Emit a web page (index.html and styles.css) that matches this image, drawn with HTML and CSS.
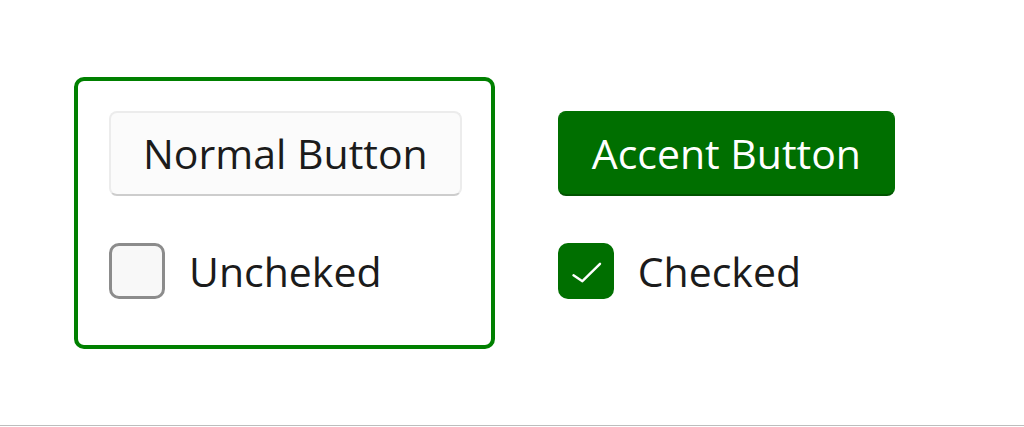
FILE: index.html
```html
<!DOCTYPE html>
<html lang="en">
<head>
<meta charset="utf-8">
<title>Buttons and checkboxes</title>
<link rel="stylesheet" href="styles.css">
</head>
<body>
<main class="page">
  <section class="group">
    <button class="btn btn-normal" type="button">Normal Button</button>
    <label class="check">
      <span class="box box-empty"></span>
      <span class="check-label">Uncheked</span>
    </label>
  </section>
  <section class="column">
    <button class="btn btn-accent" type="button">Accent Button</button>
    <label class="check">
      <span class="box box-checked">
        <svg width="56" height="56" viewBox="0 0 56 56" aria-hidden="true">
          <path d="M15.5 32.3 L24.4 38.2 L42 20.8" fill="none" stroke="#ffffff" stroke-width="2.4" stroke-linecap="round" stroke-linejoin="round"/>
        </svg>
      </span>
      <span class="check-label">Checked</span>
    </label>
  </section>
</main>
<div class="rule"></div>
</body>
</html>
```

FILE: styles.css
```css
* { box-sizing: border-box; }

html, body {
  margin: 0;
  padding: 0;
  background: #ffffff;
}

body {
  font-family: "Open Sans", "Noto Sans", sans-serif;
  color: #1b1b1b;
  height: 427px;
  overflow: hidden;
}

.page {
  height: 425px;
  display: flex;
  align-items: flex-start;
  gap: 63px;
  padding: 77px 0 0 74px;
}

.group {
  display: flex;
  flex-direction: column;
  align-items: flex-start;
  gap: 47px;
  border: 4px solid #008000;
  border-radius: 10px;
  padding: 30px 29px 46px 31px;
}

.column {
  display: flex;
  flex-direction: column;
  align-items: flex-start;
  gap: 47px;
  padding-top: 34px;
}

.btn {
  height: 85px;
  padding: 0 32px;
  font-family: inherit;
  font-size: 41px;
  line-height: 1;
  border-radius: 8px;
  display: flex;
  align-items: center;
  justify-content: center;
  cursor: pointer;
}

.btn-normal {
  background: #fbfbfb;
  color: #1b1b1b;
  border: 2px solid #ececec;
  border-bottom-color: #cdcdcd;
}

.btn-accent {
  background: #006f00;
  color: #ffffff;
  border: 1px solid #006f00;
  border-bottom: 2px solid #005400;
  padding: 0 33px;
}

.check {
  display: flex;
  align-items: center;
  gap: 24px;
  height: 56px;
}

.box {
  width: 56px;
  height: 56px;
  border-radius: 10px;
  display: block;
  flex: none;
}

.box-empty {
  background: #f8f8f8;
  border: 3px solid #8c8c8c;
}

.box-checked {
  background: #006f00;
}

.box-checked svg {
  display: block;
}

.check-label {
  font-size: 41px;
  line-height: 1;
  color: #1b1b1b;
}

.rule {
  height: 1px;
  background: #bdbdbd;
}
```
